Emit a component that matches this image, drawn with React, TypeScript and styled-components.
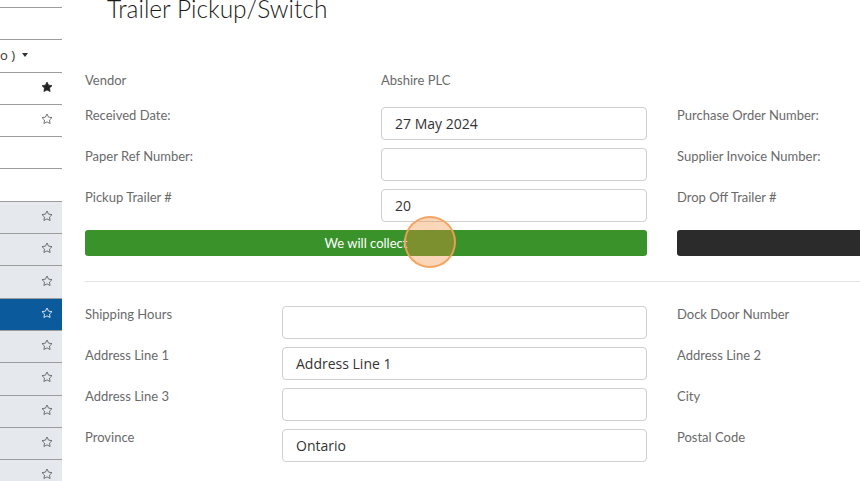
import React from "react";
import styled, { createGlobalStyle } from "styled-components";

const Global = createGlobalStyle`
  html, body { margin: 0; padding: 0; background: #fff; overflow: hidden; }
  * { box-sizing: border-box; }
`;

const Page = styled.div`
  display: flex;
  width: 860px;
  height: 481px;
  overflow: hidden;
  background: #fff;
  font-family: Lato, "Open Sans", sans-serif;
`;

const Sidebar = styled.div`
  width: 62px;
  flex-shrink: 0;
  display: flex;
  flex-direction: column;
  overflow: hidden;
`;

type Tone = "white" | "gray" | "active";

const SideRow = styled.div<{ $tone: Tone; $short?: boolean }>`
  height: ${(p) => (p.$short ? "8px" : "32.3px")};
  flex-shrink: 0;
  border-bottom: 1px solid #9c9c9c;
  background: ${(p) => (p.$tone === "gray" ? "#e5e8ec" : p.$tone === "active" ? "#0b5a9b" : "#fff")};
  color: ${(p) => (p.$tone === "active" ? "#fff" : "#444")};
  display: flex;
  align-items: center;
  justify-content: flex-end;
  padding-right: 9px;
  padding-bottom: 3px;
`;

const DropRow = styled.div`
  display: flex;
  align-items: center;
  gap: 7px;
  width: 100%;
  font-family: "Open Sans", sans-serif;
  font-size: 13px;
  color: #333;
  margin-left: -2px;
  margin-top: 1px;
`;

const Caret = styled.span`
  width: 0;
  height: 0;
  border-left: 3.5px solid transparent;
  border-right: 3.5px solid transparent;
  border-top: 4px solid #333;
  margin-top: 1px;
`;

const Star = ({ filled, color }: { filled?: boolean; color: string }) => (
  <svg width="12" height="12" viewBox="0 0 24 24">
    <path
      d="M12 2l3.09 6.26L22 9.27l-5 4.87 1.18 6.88L12 17.77l-6.18 3.25L7 14.14 2 9.27l6.91-1.01L12 2z"
      fill={filled ? color : "none"}
      stroke={color}
      strokeWidth={filled ? 1.5 : 1.6}
      strokeLinejoin="round"
    />
  </svg>
);

const Main = styled.div`
  flex: 1;
  min-width: 0;
  overflow: hidden;
  padding-left: 23px;
  position: relative;
`;

const Title = styled.h1`
  margin: -3px 0 45px 22px;
  font-family: Lato, sans-serif;
  font-weight: 300;
  font-size: 24.5px;
  line-height: 24px;
  color: #1a1a1a;
  white-space: nowrap;
`;

const Grid = styled.div<{ $cols: string }>`
  display: grid;
  grid-template-columns: ${(p) => p.$cols};
  column-gap: 30px;
  row-gap: 8px;
  width: 1154px;
`;

const Label = styled.div<{ $static?: boolean }>`
  font-family: Lato, sans-serif;
  font-size: 13px;
  line-height: 17px;
  color: #6a6a6a;
  padding-top: ${(p) => (p.$static ? "6px" : "0")};
  min-height: 33px;
  white-space: nowrap;
`;

const Input = styled.div`
  height: 33px;
  border: 1px solid #cfcfcf;
  border-radius: 4px;
  padding: 0 13px;
  display: flex;
  align-items: center;
  font-family: "Open Sans", sans-serif;
  font-size: 14px;
  color: #333;
`;

const Button = styled.div<{ $variant: "green" | "dark"; $span: string }>`
  grid-column: ${(p) => p.$span};
  height: 26px;
  border-radius: 3px;
  background: ${(p) => (p.$variant === "green" ? "#3a922a" : "#2b2b2b")};
  color: #fff;
  display: flex;
  align-items: center;
  justify-content: center;
  font-family: Lato, sans-serif;
  font-size: 13px;
`;

const Divider = styled.hr`
  border: 0;
  border-top: 1px solid #e4e4e4;
  margin: 25px 0 24px 0;
  width: 1154px;
`;

const Click = styled.div`
  position: absolute;
  left: ${430 - 62 - 26}px;
  top: ${242 - 26}px;
  width: 52px;
  height: 52px;
  border-radius: 50%;
  background: rgba(245, 140, 60, 0.36);
  border: 2px solid rgba(244, 160, 90, 0.9);
  pointer-events: none;
`;

const sideRows: { tone: Tone; star?: "filled" | "outline"; drop?: boolean; short?: boolean }[] = [
  { tone: "white", short: true },
  { tone: "white" },
  { tone: "white", drop: true },
  { tone: "white", star: "filled" },
  { tone: "white", star: "outline" },
  { tone: "white" },
  { tone: "white" },
  { tone: "gray", star: "outline" },
  { tone: "gray", star: "outline" },
  { tone: "gray", star: "outline" },
  { tone: "active", star: "outline" },
  { tone: "gray", star: "outline" },
  { tone: "gray", star: "outline" },
  { tone: "gray", star: "outline" },
  { tone: "gray", star: "outline" },
  { tone: "gray", star: "outline" },
];

const firstRows: [string, string, string][] = [
  ["Received Date:", "27 May 2024", "Purchase Order Number:"],
  ["Paper Ref Number:", "", "Supplier Invoice Number:"],
  ["Pickup Trailer #", "20", "Drop Off Trailer #"],
];

const addressRows: [string, string, string][] = [
  ["Shipping Hours", "", "Dock Door Number"],
  ["Address Line 1", "Address Line 1", "Address Line 2"],
  ["Address Line 3", "", "City"],
  ["Province", "Ontario", "Postal Code"],
];

export default function App() {
  return (
    <>
      <Global />
      <Page>
        <Sidebar>
          {sideRows.map((r, i) => (
            <SideRow key={i} $tone={r.tone} $short={r.short}>
              {r.drop && (
                <DropRow>
                  <span>o )</span>
                  <Caret />
                </DropRow>
              )}
              {r.star && (
                <Star
                  filled={r.star === "filled"}
                  color={r.tone === "active" ? "#fff" : r.star === "filled" ? "#222" : "#555"}
                />
              )}
            </SideRow>
          ))}
        </Sidebar>
        <Main>
          <Title>Trailer Pickup/Switch</Title>
          <Grid $cols="266px 266px 266px 266px">
            <Label $static>Vendor</Label>
            <Label $static>Abshire PLC</Label>
            <Label $static />
            <Label $static />
            {firstRows.map(([l, v, r]) => (
              <React.Fragment key={l}>
                <Label>{l}</Label>
                <Input>{v}</Input>
                <Label>{r}</Label>
                <Input />
              </React.Fragment>
            ))}
            <Button $variant="green" $span="1 / 3">We will collect</Button>
            <Button $variant="dark" $span="3 / 5" />
          </Grid>
          <Divider />
          <Grid $cols="167px 365px 167px 365px">
            {addressRows.map(([l, v, r]) => (
              <React.Fragment key={l}>
                <Label>{l}</Label>
                <Input>{v}</Input>
                <Label>{r}</Label>
                <Input />
              </React.Fragment>
            ))}
          </Grid>
          <Click />
        </Main>
      </Page>
    </>
  );
}
